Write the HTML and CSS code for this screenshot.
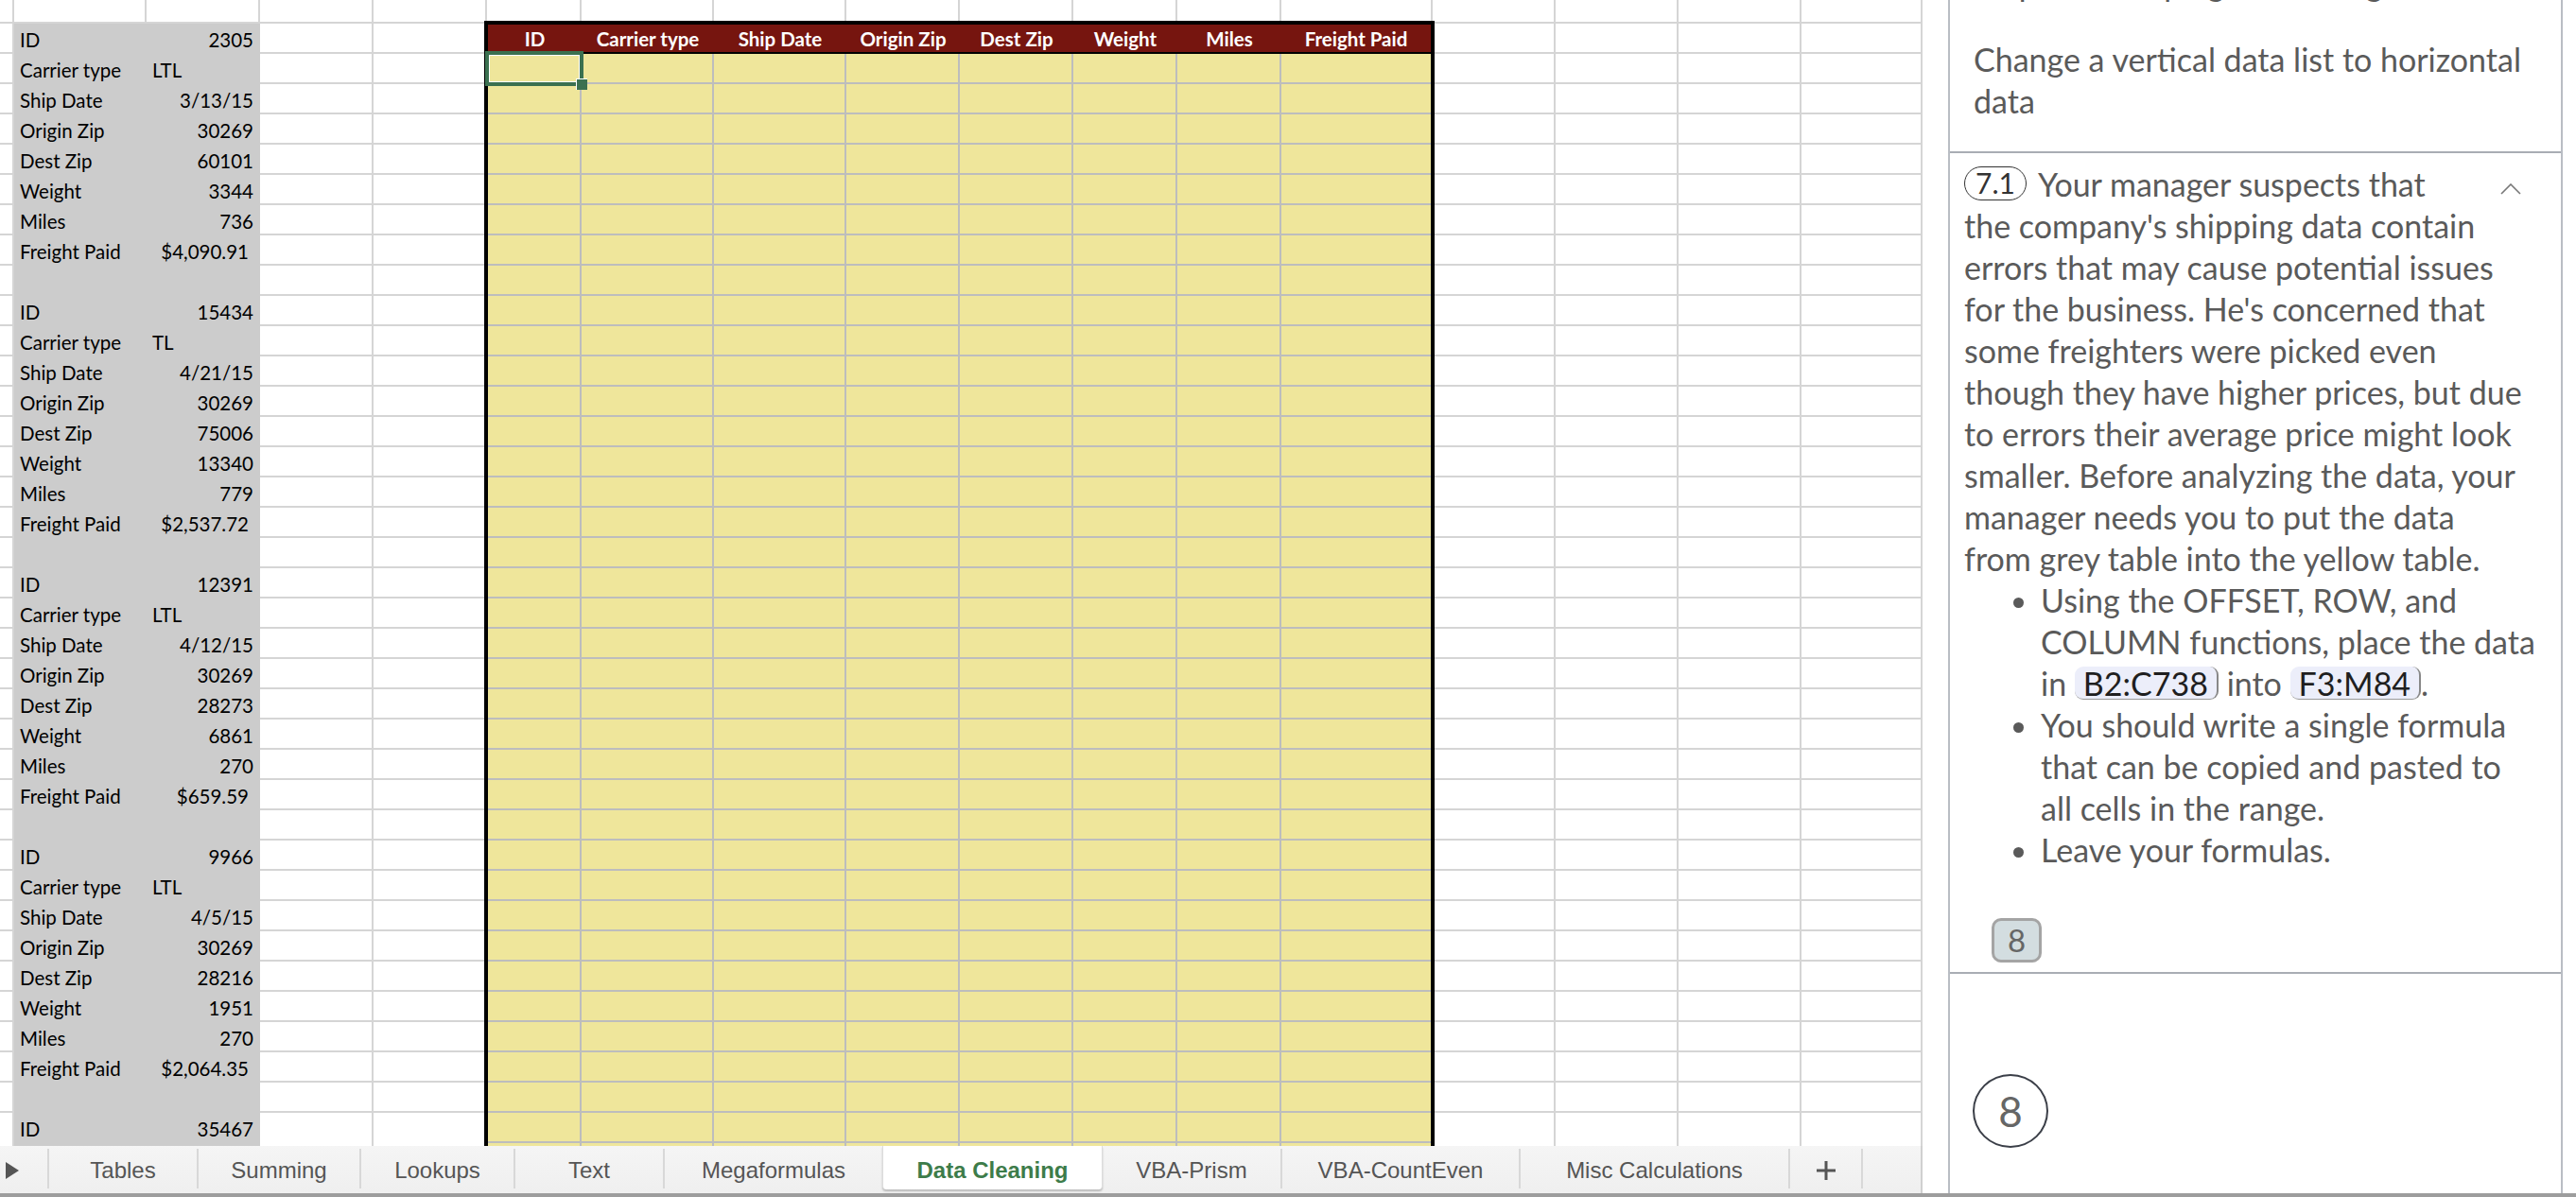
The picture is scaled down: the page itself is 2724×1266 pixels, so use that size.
FILE: index.html
```html
<!DOCTYPE html>
<html lang="en">
<head>
<meta charset="utf-8">
<title>Data Cleaning</title>
<link rel="stylesheet" href="styles.css">
</head>
<body>
<div class="app">
  <div class="workbook">
    <div class="sheet">
      <div class="gridlines">
        <div></div><div></div><div></div><div></div><div></div><div></div><div></div><div></div><div></div>
        <div></div><div></div><div></div><div></div><div></div><div></div><div></div><div></div>
      </div>

      <div class="grey">
        <span class="lbl">ID</span><span class="num">2305</span>
        <span class="lbl">Carrier type</span><span class="txt">LTL</span>
        <span class="lbl">Ship Date</span><span class="num">3/13/15</span>
        <span class="lbl">Origin Zip</span><span class="num">30269</span>
        <span class="lbl">Dest Zip</span><span class="num">60101</span>
        <span class="lbl">Weight</span><span class="num">3344</span>
        <span class="lbl">Miles</span><span class="num">736</span>
        <span class="lbl">Freight Paid</span><span class="cur">$4,090.91</span>
        <span class="blank"></span>

        <span class="lbl">ID</span><span class="num">15434</span>
        <span class="lbl">Carrier type</span><span class="txt">TL</span>
        <span class="lbl">Ship Date</span><span class="num">4/21/15</span>
        <span class="lbl">Origin Zip</span><span class="num">30269</span>
        <span class="lbl">Dest Zip</span><span class="num">75006</span>
        <span class="lbl">Weight</span><span class="num">13340</span>
        <span class="lbl">Miles</span><span class="num">779</span>
        <span class="lbl">Freight Paid</span><span class="cur">$2,537.72</span>
        <span class="blank"></span>

        <span class="lbl">ID</span><span class="num">12391</span>
        <span class="lbl">Carrier type</span><span class="txt">LTL</span>
        <span class="lbl">Ship Date</span><span class="num">4/12/15</span>
        <span class="lbl">Origin Zip</span><span class="num">30269</span>
        <span class="lbl">Dest Zip</span><span class="num">28273</span>
        <span class="lbl">Weight</span><span class="num">6861</span>
        <span class="lbl">Miles</span><span class="num">270</span>
        <span class="lbl">Freight Paid</span><span class="cur">$659.59</span>
        <span class="blank"></span>

        <span class="lbl">ID</span><span class="num">9966</span>
        <span class="lbl">Carrier type</span><span class="txt">LTL</span>
        <span class="lbl">Ship Date</span><span class="num">4/5/15</span>
        <span class="lbl">Origin Zip</span><span class="num">30269</span>
        <span class="lbl">Dest Zip</span><span class="num">28216</span>
        <span class="lbl">Weight</span><span class="num">1951</span>
        <span class="lbl">Miles</span><span class="num">270</span>
        <span class="lbl">Freight Paid</span><span class="cur">$2,064.35</span>
        <span class="blank"></span>

        <span class="lbl">ID</span><span class="num">35467</span>
      </div>

      <div class="ytable">
        <div class="yhead">
          <div>ID</div><div>Carrier type</div><div>Ship Date</div><div>Origin Zip</div>
          <div>Dest Zip</div><div>Weight</div><div>Miles</div><div>Freight Paid</div>
        </div>
        <div class="ybody">
          <div class="first"><div class="sel"><div class="handle"></div></div></div>
          <div></div><div></div><div></div><div></div><div></div><div></div><div class="last"></div>
        </div>
      </div>
    </div>

    <div class="tabbar">
      <div class="tab play">
        <svg width="14" height="18" viewBox="0 0 14 18"><polygon points="0,0 14,9 0,18" fill="#555"/></svg>
      </div>
      <div class="tab">Tables</div>
      <div class="tab">Summing</div>
      <div class="tab">Lookups</div>
      <div class="tab">Text</div>
      <div class="tab noline">Megaformulas</div>
      <div class="tab active">Data Cleaning</div>
      <div class="tab">VBA-Prism</div>
      <div class="tab">VBA-CountEven</div>
      <div class="tab">Misc Calculations</div>
      <div class="tab plus">
        <svg width="20" height="20" viewBox="0 0 20 20"><path d="M10 0V20M0 10H20" stroke="#555" stroke-width="3"/></svg>
      </div>
    </div>
  </div>

  <div class="panel">
    <div class="sec sec1">
      <p class="cliptitle">Step 7: Reshaping Data using OFFSET</p>
      <p class="desc">Change a vertical data list to horizontal<br>data</p>
    </div>
    <div class="sec sec2">
      <svg class="chev" width="22" height="12" viewBox="0 0 22 12"><polyline points="1,11 11,1 21,11" fill="none" stroke="#777" stroke-width="1.6"/></svg>
      <p class="q"><span class="step">7.1</span>Your manager suspects that<br>the company's shipping data contain<br>errors that may cause potential issues<br>for the business. He's concerned that<br>some freighters were picked even<br>though they have higher prices, but due<br>to errors their average price might look<br>smaller. Before analyzing the data, your<br>manager needs you to put the data<br>from grey table into the yellow table.</p>
      <ul class="list">
        <li>Using the OFFSET, ROW, and<br>COLUMN functions, place the data<br>in <span class="code">B2:C738</span> into <span class="code">F3:M84</span>.</li>
        <li>You should write a single formula<br>that can be copied and pasted to<br>all cells in the range.</li>
        <li>Leave your formulas.</li>
      </ul>
      <div class="pts">8</div>
    </div>
    <div class="sec sec3">
      <div class="circle">8</div>
    </div>
  </div>
</div>
<div class="bottomline"></div>
</body>
</html>
```

FILE: styles.css
```css
* { box-sizing: border-box; }
html, body { margin: 0; padding: 0; }
body {
  width: 2724px;
  height: 1266px;
  overflow: hidden;
  background: #fff;
  font-family: Lato, "Liberation Sans", sans-serif;
}

.app { display: flex; height: 1262px; }

.workbook { width: 2033px; display: flex; flex-direction: column; }

/* ---------- sheet ---------- */
.sheet {
  --cols: 15px 140px 120px 120px 120px 100px 140px 140px 120px 120px 110px 110px 160px 130px 130px 130px 128px;
  display: grid;
  grid-template-columns: var(--cols);
  grid-template-rows: 25px repeat(37, 32px) 1fr;
  height: 1212px;
  overflow: hidden;
  background-color: #fff;
  background-image: repeating-linear-gradient(to bottom, transparent 0 30px, #d5d5d5 30px 32px);
  background-position: 0 -7px;
  font-family: Lato, "Liberation Sans", sans-serif;
  font-size: 20.5px;
  color: #000;
}

.gridlines {
  grid-column: 1 / -1;
  grid-row: 1 / -1;
  display: grid;
  grid-template-columns: var(--cols);
}
.gridlines div { border-right: 2px solid #d5d5d5; }

.grey {
  grid-column: 2 / 4;
  grid-row: 2 / -1;
  background: #cccccc;
  display: grid;
  grid-template-columns: 140px 120px;
  grid-auto-rows: 32px;
  align-content: start;
}
.grey span { height: 32px; line-height: 34px; white-space: nowrap; }
.grey .blank { grid-column: 1 / -1; }
.lbl { padding-left: 6px; }
.txt { padding-left: 6px; }
.num { text-align: right; padding-right: 7px; }
.cur { text-align: right; padding-right: 12px; }

.ytable {
  --ycols: 99px 140px 140px 120px 120px 110px 110px 158px;
  grid-column: 6 / 14;
  grid-row: 2 / -1;
  margin: -3px -2px 0 -3px;
  border: 4px solid #000;
  border-bottom: 0;
  display: flex;
  flex-direction: column;
}
.yhead {
  display: grid;
  grid-template-columns: var(--ycols);
  height: 31px;
  background: #76150f;
  border-bottom: 2px solid #000;
  color: #fff;
  font-weight: 700;
  font-size: 20.5px;
  text-align: center;
  line-height: 31px;
  white-space: nowrap;
}
.ybody {
  flex: 1;
  display: grid;
  grid-template-columns: var(--ycols);
  background-color: #efe69b;
  background-image: repeating-linear-gradient(to bottom, transparent 0 30px, #bdbdbd 30px 32px);
}
.ybody > div { border-right: 2px solid #bdbdbd; }
.ybody > .last { border-right: 0; }
.ybody > .first { position: relative; }

.sel {
  position: absolute;
  left: -3px;
  top: -3px;
  width: 104px;
  height: 37px;
  border: 4px solid #3b7150;
  box-shadow: inset 0 0 0 1px #fff;
}
.handle {
  position: absolute;
  left: 92px;
  top: 25px;
  width: 12px;
  height: 12px;
  background: #3b7150;
  border-left: 1px solid #fff;
  border-top: 1px solid #fff;
}

/* ---------- tab bar ---------- */
.tabbar {
  height: 50px;
  background: linear-gradient(#f5f5f5, #efefef);
  border-right: 2px solid #d0d0d0;
  display: grid;
  grid-template-columns: 52px 158px 172px 163px 158px 230px 233px 190px 252px 285px 77px;
  align-items: start;
  font-family: "Liberation Sans", Arial, sans-serif;
  font-size: 24px;
  color: #555;
}
.tab {
  height: 42px;
  margin-top: 3px;
  border-right: 2px solid #d8d8d8;
  display: flex;
  align-items: center;
  justify-content: center;
  padding-top: 3px;
  white-space: nowrap;
}
.tab.play { justify-content: flex-start; padding-left: 6px; }
.tab.noline { border-right: 0; }
.tab.active {
  height: 46px;
  margin-top: 0;
  padding-top: 6px;
  background: #fff;
  color: #3d7c4a;
  font-weight: 700;
  border-left: 1px solid #dcdcdc;
  border-right: 1px solid #dcdcdc;
  border-radius: 0 0 4px 4px;
  box-shadow: 0 2px 2px rgba(0, 0, 0, 0.22);
}

/* ---------- instructions panel ---------- */
.panel {
  margin-left: 27px;
  width: 650px;
  height: 1262px;
  border-left: 2px solid #b9bdc4;
  border-right: 2px solid #b9bdc4;
  overflow: hidden;
  font-family: Lato, "Liberation Sans", sans-serif;
  font-size: 34px;
  line-height: 44px;
  color: #5a5a5a;
  display: flex;
  flex-direction: column;
}
.sec1 {
  height: 162px;
  flex: none;
  padding: 0 25px;
  border-bottom: 2px solid #a9adb4;
  overflow: hidden;
}
.cliptitle { margin: -39px 0 0; white-space: nowrap; }
.desc { margin: 36px 0 0; white-space: nowrap; }

.sec2 {
  position: relative;
  flex: none;
  padding: 11px 0 10px 15px;
  border-bottom: 2px solid #a9adb4;
}
.chev { position: absolute; right: 42px; top: 32px; }
.q { margin: 0; white-space: nowrap; }
.step {
  display: inline-block;
  height: 36px;
  line-height: 33px;
  padding: 0 11px;
  margin-right: 12px;
  border: 1.5px solid #333;
  border-radius: 18px;
  color: #333;
  font-size: 30px;
  vertical-align: 3px;
}
.list {
  margin: 0;
  padding-left: 81px;
  white-space: nowrap;
}
.code {
  display: inline-block;
  height: 35px;
  line-height: 35px;
  padding: 0 9px;
  background: #eceefa;
  color: #1f1f1f;
  border-radius: 9px;
  border-right: 2px solid #888;
  border-bottom: 1.5px solid #999;
  vertical-align: 0;
}
.pts {
  margin: 50px 0 0 29px;
  width: 53px;
  height: 47px;
  border: 3px solid #a4a4a4;
  border-radius: 10px;
  background: #d3dde0;
  color: #666;
  font-size: 33px;
  line-height: 40px;
  text-align: center;
}
.sec3 { flex: 1; padding: 106px 0 0 24px; }
.circle {
  width: 80px;
  height: 78px;
  border: 2px solid #3b3f48;
  border-radius: 50%;
  display: flex;
  align-items: center;
  justify-content: center;
  color: #666;
  font-size: 44px;
}

.bottomline { height: 4px; background: #9d9d9d; }
```
